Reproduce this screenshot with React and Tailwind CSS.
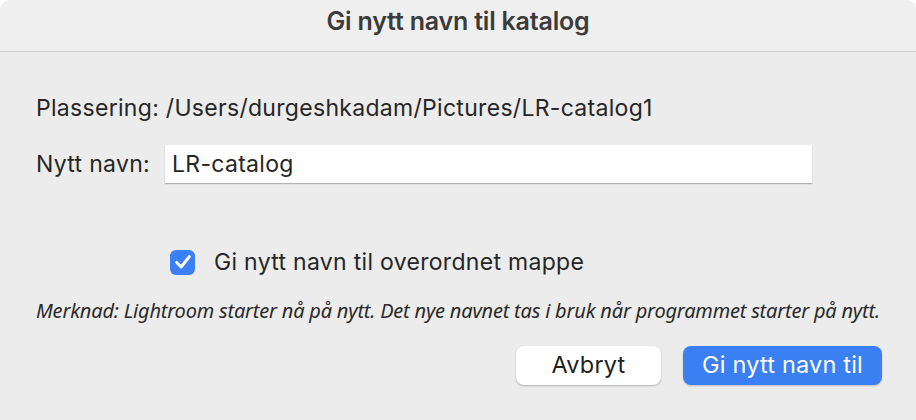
export default function App() {
  return (
    <div className="w-[916px] h-[420px] bg-[#ececec] flex flex-col overflow-hidden rounded-t-[10px] font-['Inter','Roboto',sans-serif] text-[#262626]">
      <div className="h-[52px] shrink-0 bg-[#efefef] border-b border-[#cfcfcf] flex items-center justify-center pb-[7px]">
        <h1 className="text-[25px] font-semibold text-[#3b3b3b] tracking-[-0.2px]">Gi nytt navn til katalog</h1>
      </div>

      <div className="flex flex-col pl-[36px] pr-[34px] text-[23px] tracking-[0.3px]">
        <p className="mt-[41px] leading-[30px]">
          Plassering: /Users/durgeshkadam/Pictures/LR-catalog1
        </p>

        <div className="mt-[22px] flex items-center">
          <span className="w-[129px]">Nytt navn:</span>
          <div className="w-[647px] h-[38px] bg-white shadow-[0_1px_1px_rgba(0,0,0,0.25)] flex items-center px-[7px]">
            LR-catalog
          </div>
        </div>

        <label className="mt-[62px] ml-[134px] flex items-center gap-[19px]">
          <span className="w-[25px] h-[25px] rounded-[6px] bg-[#3a80f6] flex items-center justify-center">
            <svg viewBox="0 0 24 24" className="w-[20px] h-[20px]" fill="none" stroke="white" strokeWidth="3.6" strokeLinecap="round" strokeLinejoin="round">
              <path d="M4.5 12.5 L9.8 18 L19.5 5.5" />
            </svg>
          </span>
          <span>Gi nytt navn til overordnet mappe</span>
        </label>

        <p className="mt-[16px] text-[20px] italic font-['Noto_Sans',sans-serif] text-[#2a2a2a] tracking-[-0.2px]">
          Merknad: Lightroom starter nå på nytt. Det nye navnet tas i bruk når programmet starter på nytt.
        </p>

        <div className="mt-[20px] flex justify-end gap-[22px]">
          <button className="w-[145px] h-[39px] rounded-[8px] bg-white shadow-[0_1px_2px_rgba(0,0,0,0.25)] text-[23.5px] tracking-[0.2px] text-[#1e1e1e]">
            Avbryt
          </button>
          <button className="w-[199px] h-[39px] rounded-[8px] bg-[#3a80f3] shadow-[0_1px_2px_rgba(0,0,0,0.2)] text-[23.5px] tracking-[0.2px] text-white">
            Gi nytt navn til
          </button>
        </div>
      </div>
    </div>
  );
}
